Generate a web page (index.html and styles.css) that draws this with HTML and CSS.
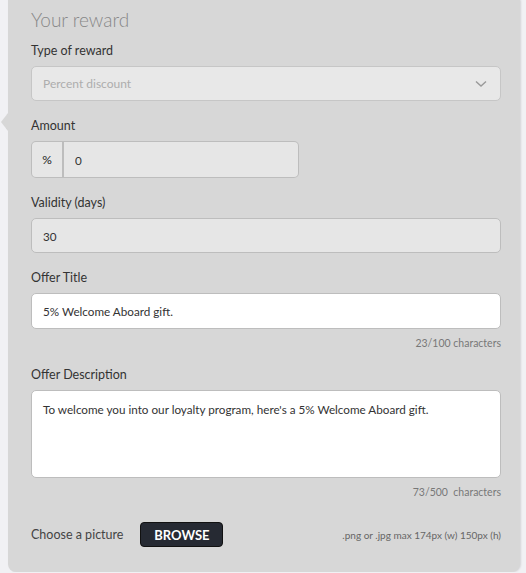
FILE: index.html
```html
<!DOCTYPE html>
<html lang="en">
<head>
    <meta charset="UTF-8">
    <meta name="viewport" content="width=device-width, initial-scale=1.0">
    <title>Your reward</title>
    <link rel="stylesheet" href="styles.css">
</head>
<body>
    <div class="panel">
        <h2 class="panel-title">Your reward</h2>

        <div class="field">
            <label for="reward-type">Type of reward</label>
            <div class="select-box" id="reward-type">
                <span class="placeholder">Percent discount</span>
                <svg class="chevron" width="12" height="8" viewBox="0 0 12 8">
                    <path d="M1 1.5 L6 6 L11 1.5" fill="none" stroke="#999" stroke-width="1.4"/>
                </svg>
            </div>
        </div>

        <div class="field">
            <label for="amount">Amount</label>
            <div class="input-group">
                <span class="addon">%</span>
                <input type="text" id="amount" class="input input-grey" value="0">
            </div>
        </div>

        <div class="field">
            <label for="validity">Validity (days)</label>
            <input type="text" id="validity" class="input input-grey" value="30">
        </div>

        <div class="field">
            <label for="offer-title">Offer Title</label>
            <input type="text" id="offer-title" class="input" value="5% Welcome Aboard gift.">
            <p class="counter">23/100 characters</p>
        </div>

        <div class="field">
            <label for="offer-desc">Offer Description</label>
            <textarea id="offer-desc" class="input textarea">To welcome you into our loyalty program, here's a 5% Welcome Aboard gift.</textarea>
            <p class="counter">73/500&nbsp; characters</p>
        </div>

        <div class="picture-row">
            <span class="picture-label">Choose a picture</span>
            <button class="btn-browse">BROWSE</button>
            <span class="picture-hint">.png or .jpg max 174px (w) 150px (h)</span>
        </div>
    </div>
</body>
</html>
```

FILE: styles.css
```css
body {
    margin: 0;
    padding: 0;
    background-color: #f1f1f4;
    font-family: Lato, "Open Sans", sans-serif;
    color: #333;
}

.panel {
    position: relative;
    width: 512px;
    margin-left: 8px;
    box-sizing: border-box;
    padding: 8px 19px 25px 23px;
    background-color: #d7d7d7;
    border-radius: 0 0 8px 8px;
    box-shadow: 1px 0 2px rgba(0, 0, 0, 0.12);
}

/* little pointer on the left side */
.panel::before {
    content: "";
    position: absolute;
    left: -7px;
    top: 113px;
    border-top: 9px solid transparent;
    border-bottom: 9px solid transparent;
    border-right: 7px solid #d7d7d7;
}

.panel-title {
    margin: 0 0 9px;
    font-size: 19px;
    line-height: 24px;
    font-weight: 300;
    color: #878787;
}

.field {
    margin-bottom: 15px;
}

.field label {
    display: block;
    padding-top: 2px;
    margin-bottom: 7px;
    font-size: 12.5px;
    line-height: 16px;
}

.select-box {
    display: flex;
    align-items: center;
    justify-content: space-between;
    height: 35px;
    box-sizing: border-box;
    padding: 0 10px 0 11px;
    background-color: #e8e8e8;
    border: 1px solid #c6c6c6;
    border-radius: 5px;
}

.placeholder {
    font-size: 12px;
    color: #adadad;
}

.chevron {
    margin-right: 3px;
}

.input {
    display: block;
    width: 100%;
    height: 36px;
    box-sizing: border-box;
    padding: 0 11px;
    font-family: inherit;
    font-size: 11.7px;
    color: #333;
    background-color: #fff;
    border: 1px solid #bdbdbd;
    border-radius: 5px;
    outline: none;
}

.input-grey {
    background-color: #e6e6e6;
    height: 35px;
}

.input-group {
    display: flex;
    width: 268px;
    height: 37px;
}

.addon {
    display: flex;
    flex-shrink: 0;
    align-items: center;
    justify-content: center;
    width: 33px;
    box-sizing: border-box;
    font-size: 12px;
    color: #222;
    background-color: #e6e6e6;
    border: 1px solid #bdbdbd;
    border-right-width: 2px;
    border-radius: 5px 0 0 5px;
}

.input-group .input {
    height: 37px;
    border-left: none;
    border-radius: 0 5px 5px 0;
}

.textarea {
    height: 88px;
    padding: 10px 11px;
    resize: none;
    line-height: 16px;
}

.counter {
    margin: 7px 0 0;
    text-align: right;
    font-size: 10.5px;
    line-height: 14px;
    color: #777;
}

.picture-row {
    display: flex;
    align-items: center;
    margin-top: 23px;
}

.picture-label {
    font-size: 12.5px;
    color: #444;
}

.btn-browse {
    margin-left: 17px;
    height: 25px;
    width: 83px;
    padding: 0;
    font-family: inherit;
    font-size: 13px;
    font-weight: 700;
    color: #fff;
    background-color: #262a33;
    border: 1px solid #111;
    border-radius: 4px;
}

.picture-hint {
    margin-left: auto;
    font-size: 10px;
    color: #666;
}
```
